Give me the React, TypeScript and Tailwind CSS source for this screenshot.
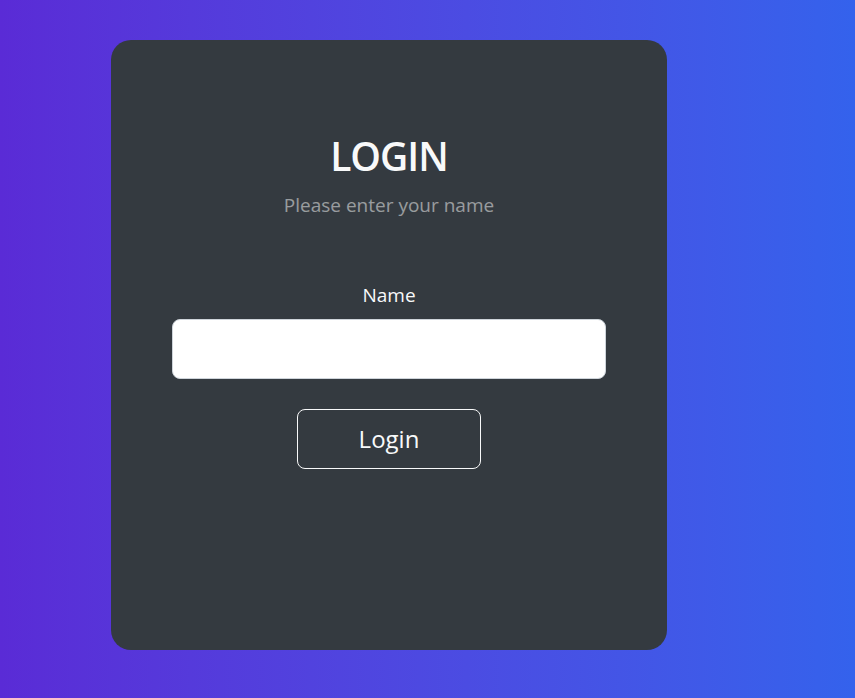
import { useState } from "react";

export default function App() {
  const [name, setName] = useState("");

  return (
    <div className="min-h-screen w-full bg-linear-to-r from-[#5a2bd6] to-[#3462ec] pt-[40px] pl-[111px] font-['Open_Sans','Noto_Sans',sans-serif]">
      <div className="flex h-[610px] w-[556px] flex-col items-center rounded-[20px] bg-[#343a40] px-[61px] pt-[92px] text-center text-[#f8f9fa]">
        <h2 className="text-[39px] leading-[48px] font-semibold tracking-[-1px] uppercase">Login</h2>
        <p className="mt-[10px] text-[19px] leading-[30px] text-white/50">Please enter your name</p>

        <label htmlFor="name" className="mt-[60px] text-[19px] leading-[30px]">
          Name
        </label>
        <input
          id="name"
          type="text"
          value={name}
          onChange={(e) => setName(e.target.value)}
          className="mt-[9px] h-[60px] w-full rounded-[8px] border border-[#ced4da] bg-white px-4 text-[22px] text-[#212529] outline-none"
        />

        <button
          type="button"
          className="mt-[30px] h-[60px] w-[184px] rounded-[8px] border border-[#f8f9fa] text-[24px] text-[#f8f9fa] hover:bg-[#f8f9fa] hover:text-[#343a40]"
        >
          Login
        </button>
      </div>
    </div>
  );
}
